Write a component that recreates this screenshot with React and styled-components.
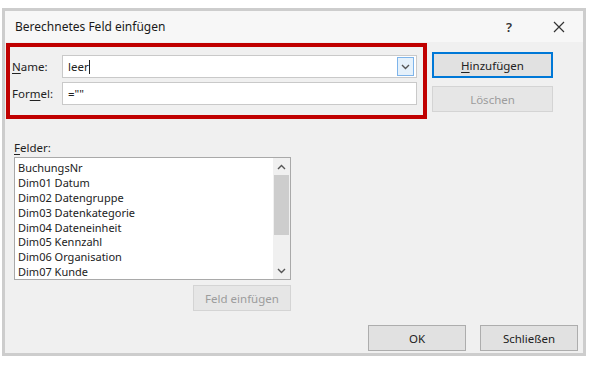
import React from "react";
import styled, { createGlobalStyle } from "styled-components";

const Global = createGlobalStyle`
  html, body { margin: 0; padding: 0; background: #ffffff; }
  body { font-family: "Noto Sans", "Open Sans", sans-serif; color: #222; }
`;

const Page = styled.div`
  width: 595px;
  height: 369px;
  padding: 8px 0 0 2px;
  box-sizing: border-box;
`;

const Dialog = styled.div`
  width: 584px;
  height: 348px;
  box-sizing: border-box;
  border: 3px solid #cdcdcd;
  background: #f0f0f0;
  display: flex;
  flex-direction: column;
`;

const TitleBar = styled.div`
  height: 31px;
  display: flex;
  align-items: center;
  padding: 0 0 0 10px;
  background: #f7f7f7;
  font-size: 12px;
  color: #1a1a1a;
`;

const Title = styled.div`
  flex: 1;
`;

const TitleBtn = styled.div`
  width: ${p => p.$w}px;
  display: flex;
  justify-content: center;
  align-items: center;
  font-size: 13px;
  font-weight: 600;
  color: #333;
`;

const Body = styled.div`
  flex: 1;
  display: flex;
  flex-direction: column;
  padding: 1px 0 0 1px;
`;

const TopRow = styled.div`
  display: flex;
  align-items: flex-start;
`;

const RedBox = styled.div`
  width: 421px;
  height: 76px;
  box-sizing: border-box;
  border: 4px solid #c00000;
  padding: 8px 6px 0 2px;
  display: flex;
  flex-direction: column;
  gap: 4px;
`;

const FieldRow = styled.div`
  display: flex;
  align-items: center;
  height: 23px;
`;

const Label = styled.div`
  width: 50px;
  font-size: 11.5px;
  color: #222;
  u { text-decoration: underline; text-underline-offset: 2px; }
`;

const Input = styled.div`
  flex: 1;
  height: 23px;
  box-sizing: border-box;
  border: 1px solid #c9c9c9;
  background: #fff;
  display: flex;
  align-items: center;
  padding: 0 5px;
  font-size: 11.5px;
  color: #222;
`;

const InputText = styled.span`
  flex: 1;
`;

const Caret = styled.span`
  display: inline-block;
  width: 1px;
  height: 14px;
  background: #222;
  vertical-align: middle;
`;

const DropBtn = styled.div`
  width: 17px;
  height: 19px;
  margin-right: -3px;
  box-sizing: border-box;
  border: 1px solid #7eb4ea;
  background: #e5f1fb;
  display: flex;
  align-items: center;
  justify-content: center;
`;

const SideButtons = styled.div`
  display: flex;
  flex-direction: column;
  gap: 8px;
  margin: 9px 0 0 5px;
`;

const Button = styled.div`
  width: ${p => p.$w || 121}px;
  height: 26px;
  box-sizing: border-box;
  border: 1px solid ${p => (p.$default ? "#0078d7" : p.$disabled ? "#d4d4d4" : "#adadad")};
  box-shadow: ${p => (p.$default ? "inset 0 0 0 1px #0078d7" : "none")};
  background: ${p => (p.$disabled ? "#e6e6e6" : "#e1e1e1")};
  color: ${p => (p.$disabled ? "#9c9c9c" : "#222")};
  display: flex;
  align-items: center;
  justify-content: center;
  font-size: 11.5px;
  u { text-decoration: underline; text-underline-offset: 2px; }
`;

const FelderLabel = styled.div`
  margin: 21px 0 2px 8px;
  font-size: 11.5px;
  color: #222;
  u { text-decoration: underline; text-underline-offset: 2px; }
`;

const ListBox = styled.div`
  margin-left: 8px;
  width: 277px;
  height: 123px;
  box-sizing: border-box;
  border: 1px solid #a9a9a9;
  background: #fff;
  display: flex;
`;

const Items = styled.div`
  flex: 1;
  padding: 2px 0 0 3px;
  overflow: hidden;
`;

const Item = styled.div`
  height: 14.9px;
  line-height: 15px;
  font-size: 11px;
  color: #222;
  white-space: nowrap;
`;

const ScrollBar = styled.div`
  width: 17px;
  display: flex;
  flex-direction: column;
  background: #f0f0f0;
`;

const Arrow = styled.div`
  height: 17px;
  display: flex;
  align-items: center;
  justify-content: center;
`;

const Track = styled.div`
  flex: 1;
  display: flex;
  flex-direction: column;
  padding: 0 1px;
`;

const Thumb = styled.div`
  height: 60px;
  background: #cdcdcd;
`;

const FeldRow = styled.div`
  display: flex;
  justify-content: flex-end;
  width: 285px;
  margin-top: 5px;
`;

const BottomRow = styled.div`
  display: flex;
  justify-content: flex-end;
  gap: 14px;
  padding-right: 5px;
  margin-top: 14px;
`;

const Chevron = ({ up }) => (
  <svg width="9" height="6" viewBox="0 0 9 6">
    <path
      d={up ? "M1 5 L4.5 1.5 L8 5" : "M1 1 L4.5 4.5 L8 1"}
      fill="none"
      stroke="#555"
      strokeWidth="1.4"
    />
  </svg>
);

const CloseIcon = () => (
  <svg width="12" height="12" viewBox="0 0 12 12">
    <path d="M1 1 L11 11 M11 1 L1 11" stroke="#333" strokeWidth="1.2" fill="none" />
  </svg>
);

const fields = [
  "BuchungsNr",
  "Dim01 Datum",
  "Dim02 Datengruppe",
  "Dim03 Datenkategorie",
  "Dim04 Dateneinheit",
  "Dim05 Kennzahl",
  "Dim06 Organisation",
  "Dim07 Kunde",
];

export default function App() {
  return (
    <>
      <Global />
      <Page>
        <Dialog>
          <TitleBar>
            <Title>Berechnetes Feld einfügen</Title>
            <TitleBtn $w={56}>?</TitleBtn>
            <TitleBtn $w={44}>
              <CloseIcon />
            </TitleBtn>
            <TitleBtn $w={2} />
          </TitleBar>
          <Body>
            <TopRow>
              <RedBox>
                <FieldRow>
                  <Label>
                    <u>N</u>ame:
                  </Label>
                  <Input>
                    <InputText>
                      leer<Caret />
                    </InputText>
                    <DropBtn>
                      <Chevron />
                    </DropBtn>
                  </Input>
                </FieldRow>
                <FieldRow>
                  <Label>
                    For<u>m</u>el:
                  </Label>
                  <Input>
                    <InputText>=""</InputText>
                  </Input>
                </FieldRow>
              </RedBox>
              <SideButtons>
                <Button $default>
                  <span>
                    <u>H</u>inzufügen
                  </span>
                </Button>
                <Button $disabled>Löschen</Button>
              </SideButtons>
            </TopRow>
            <FelderLabel>
              <u>F</u>elder:
            </FelderLabel>
            <ListBox>
              <Items>
                {fields.map(f => (
                  <Item key={f}>{f}</Item>
                ))}
              </Items>
              <ScrollBar>
                <Arrow>
                  <Chevron up />
                </Arrow>
                <Track>
                  <Thumb />
                </Track>
                <Arrow>
                  <Chevron />
                </Arrow>
              </ScrollBar>
            </ListBox>
            <FeldRow>
              <Button $disabled $w={98}>Feld einfügen</Button>
            </FeldRow>
            <BottomRow>
              <Button $w={98}>OK</Button>
              <Button $w={98}>Schließen</Button>
            </BottomRow>
          </Body>
        </Dialog>
      </Page>
    </>
  );
}
